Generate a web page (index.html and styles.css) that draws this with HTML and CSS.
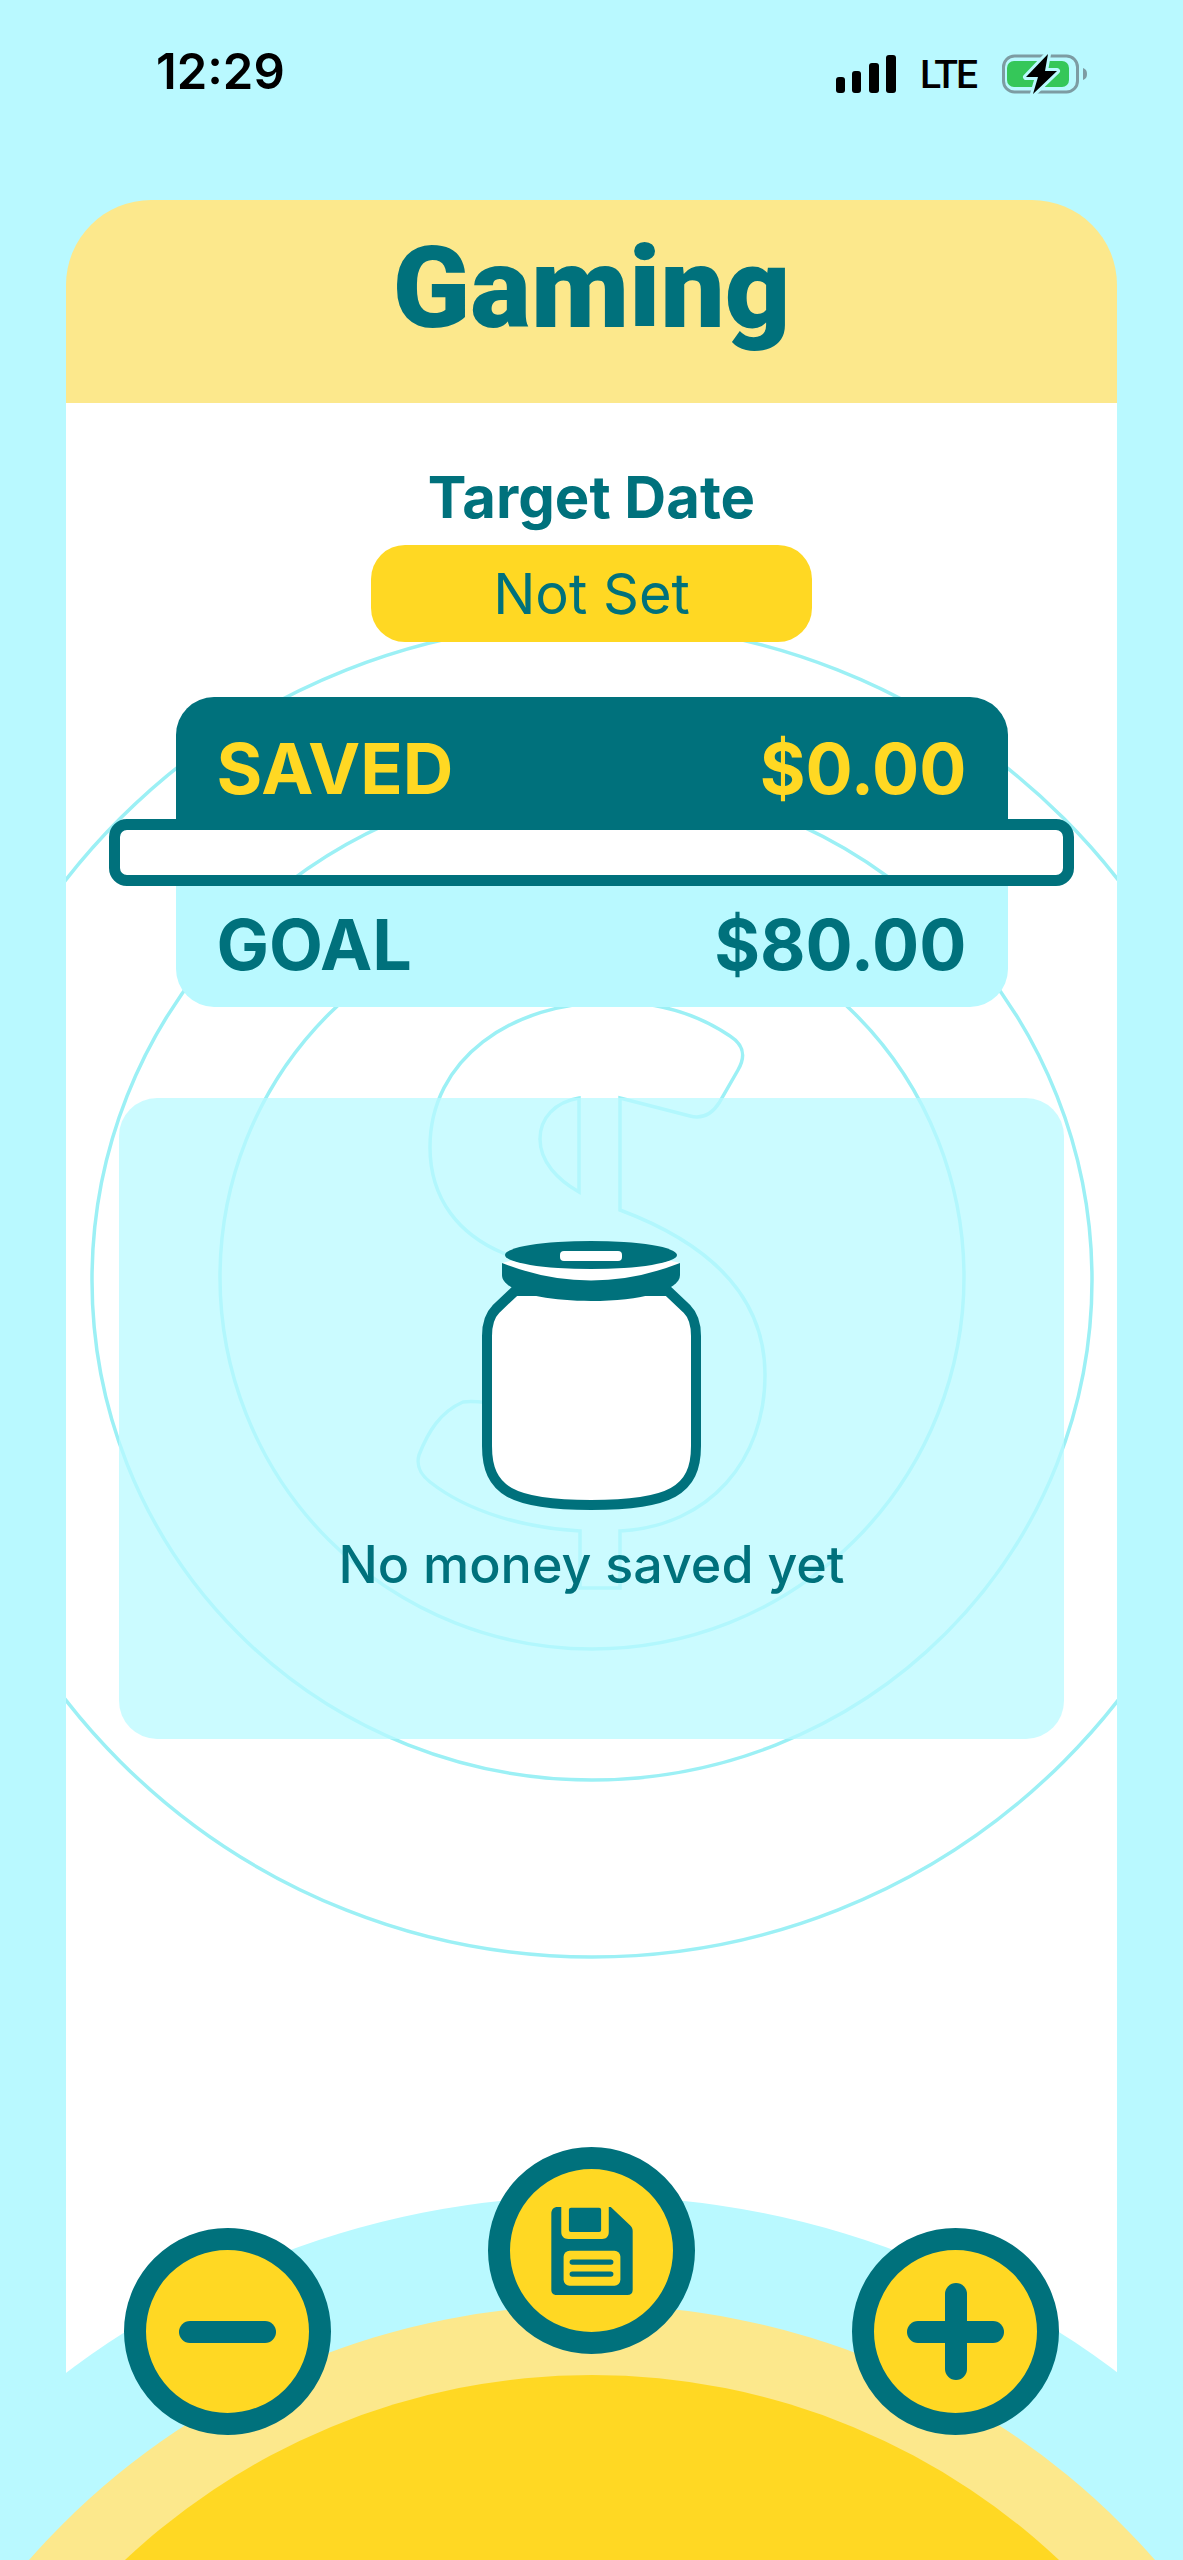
FILE: index.html
```html
<!DOCTYPE html>
<html lang="en">
<head>
    <meta charset="UTF-8">
    <title>Gaming</title>
    <link rel="stylesheet" href="styles.css">
</head>
<body>

<div class="status-bar">
    <span class="time">12:29</span>
    <div class="status-right">
        <svg class="signal" width="60" height="38" viewBox="0 0 60 38">
            <rect x="0" y="22" width="9" height="16" rx="3"/>
            <rect x="16" y="16" width="9" height="22" rx="3"/>
            <rect x="33" y="8" width="10" height="30" rx="3"/>
            <rect x="50" y="0" width="10" height="38" rx="3"/>
        </svg>
        <span class="network">LTE</span>
        <svg class="battery" width="85" height="40" viewBox="0 0 85 40">
            <rect x="1.5" y="2" width="74" height="36" rx="11" fill="none" stroke="#7d9ca3" stroke-width="3"/>
            <rect x="5" y="7" width="62" height="26" rx="7" fill="#35c759"/>
            <path d="M81 14c3 1 4 3 4 6s-1 5-4 6z" fill="#7d9ca3"/>
            <path d="M46 0L24 23H36L31 40L55 17H43Z" fill="#000" stroke="#b9f9ff" stroke-width="6" paint-order="stroke" stroke-linejoin="round"/>
        </svg>
    </div>
</div>

<div class="card">
    <div class="card-head">
        <h1 class="title">Gaming</h1>
    </div>
    <div class="card-body">
        <!-- coin watermark, coordinates are page pixels -->
        <svg class="coin" viewBox="66 403 1051 2157">
            <circle cx="592" cy="1290" r="667"/>
            <circle cx="592" cy="1280" r="500"/>
            <circle cx="592" cy="1277" r="372"/>
            <path d="M620 1098L690 1116C702 1119 712 1114 719 1103L738 1070C746 1056 744 1045 730 1036C696 1013 655 1002 613 1002C510 1002 430 1060 430 1147C430 1200 460 1235 503 1253L580 1282V1340L500 1404C485 1403 475 1400 463 1402C440 1412 428 1432 419 1455C416 1466 420 1474 430 1482C468 1512 525 1528 580 1531V1588H620V1531C710 1526 765 1460 765 1375C765 1290 700 1240 620 1210Z"/>
            <path d="M579 1098C555 1102 540 1118 540 1139C540 1162 558 1180 579 1192Z"/>
        </svg>

        <h2 class="date-label">Target Date</h2>
        <div class="date-pill">Not Set</div>

        <div class="summary">
            <div class="row row-saved"><span>SAVED</span><span>$0.00</span></div>
            <div class="progress"></div>
            <div class="row row-goal"><span>GOAL</span><span>$80.00</span></div>
        </div>

        <div class="empty-box">
            <svg class="jar" width="219" height="270" viewBox="0 0 219 270">
                <path d="M33 50L14 68C8 74 5 84 5 95V205C5 250 30 264 109 264S214 250 214 205V95C214 84 211 74 205 68L186 50Z" fill="#fff" stroke="#00717c" stroke-width="10" stroke-linejoin="round"/>
                <path d="M20 22V34C20 50 60 60 109 60S198 50 198 34V22Z" fill="#00717c"/>
                <path d="M20 22Q109 57 198 22Q109 -2 20 22Z" fill="#fff"/>
                <ellipse cx="109" cy="14" rx="86" ry="14" fill="#00717c"/>
                <rect x="78" y="10" width="62" height="10" rx="4" fill="#fff"/>
            </svg>
            <p class="empty-text">No money saved yet</p>
        </div>
    </div>
</div>

<div class="hills">
    <div class="hill hill-cyan"></div>
    <div class="hill hill-pale"></div>
    <div class="hill hill-yellow"></div>
</div>

<div class="controls">
    <div class="round-btn">
        <span class="minus-bar"></span>
    </div>
    <div class="round-btn save-btn">
        <svg width="82" height="88" viewBox="245 230 245 265">
            <path d="M245 250C245 238 252 230 264 230H275V305C275 318 283 326 296 326H398C411 326 418 318 418 305V230H424L482 285C487 290 490 295 490 302V480C490 490 484 495 474 495H260C251 495 245 489 245 480Z" fill="#00717c"/>
            <rect x="298" y="232" width="97" height="73" rx="6" fill="#00717c"/>
            <rect x="282" y="362" width="171" height="105" rx="18" fill="#ffd823"/>
            <rect x="300" y="388" width="132" height="16" rx="8" fill="#00717c"/>
            <rect x="300" y="424" width="132" height="16" rx="8" fill="#00717c"/>
        </svg>
    </div>
    <div class="round-btn">
        <span class="minus-bar"></span>
        <span class="plus-bar"></span>
    </div>
</div>

</body>
</html>
```

FILE: styles.css
```css
html, body, div, h1, h2, p, span {
    margin: 0;
    padding: 0;
}
html {
    overflow: hidden;
}
body {
    width: 1183px;
    height: 2560px;
    position: relative;
    overflow: hidden;
    background-color: #b9f9ff;
    font-family: Inter, "Liberation Sans", sans-serif;
    color: #00717c;
}

.status-bar {
    height: 200px;
    box-sizing: border-box;
    padding: 46px 96px 0 156px;
    display: flex;
    justify-content: space-between;
    align-items: flex-start;
    color: #000;
}
.time {
    font-size: 49px;
    line-height: 52px;
    font-weight: 600;
}
.status-right {
    display: flex;
    align-items: center;
    padding-top: 6px;
}
.signal {
    margin-right: 24px;
}
.network {
    font-family: Roboto, sans-serif;
    font-size: 39px;
    line-height: 42px;
    padding-top: 2px;
    font-weight: 500;
    letter-spacing: -2px;
    width: 56px;
    margin-right: 26px;
}

.card {
    width: 1051px;
    height: 2360px;
    margin-left: 66px;
    position: relative;
}
.card-head {
    height: 203px;
    background-color: #fce88c;
    border-radius: 85px 85px 0 0;
    text-align: center;
}
.title {
    font-family: Roboto, sans-serif;
    font-size: 114px;
    line-height: 130px;
    font-weight: 900;
    padding-top: 23px;
}
.card-body {
    height: 2157px;
    background-color: #fff;
    position: relative;
    overflow: hidden;
    text-align: center;
}
.coin {
    position: absolute;
    left: 0;
    top: 0;
    width: 1051px;
    height: 2157px;
    fill: none;
    stroke: #9cf0f5;
    stroke-width: 3.5;
}

.date-label {
    position: relative;
    font-size: 58px;
    line-height: 68px;
    font-weight: 700;
    padding-top: 60px;
}
.date-pill {
    position: relative;
    width: 441px;
    height: 97px;
    line-height: 99px;
    margin: 14px auto 0;
    font-size: 56px;
    background-color: #ffd823;
    border-radius: 34px;
}

.summary {
    position: relative;
    width: 832px;
    margin: 55px auto 0;
}
.row {
    display: flex;
    justify-content: space-between;
    box-sizing: border-box;
    padding: 0 41px;
    font-size: 70px;
    font-weight: 700;
}
.row-saved {
    height: 122px;
    line-height: 86px;
    padding-top: 29px;
    background-color: #00717c;
    color: #ffd823;
    border-radius: 38px 38px 0 0;
}
.row-goal {
    height: 121px;
    line-height: 86px;
    padding-top: 16px;
    background-color: #b9f9ff;
    border-radius: 0 0 38px 38px;
}
.progress {
    height: 67px;
    box-sizing: border-box;
    margin: 0 -66px 0 -67px;
    border: 11px solid #00717c;
    border-radius: 18px;
}

.empty-box {
    position: relative;
    width: 945px;
    height: 641px;
    box-sizing: border-box;
    margin: 91px auto 0;
    padding-top: 143px;
    background-color: rgba(185, 249, 255, 0.75);
    border-radius: 38px;
}
.jar {
    display: block;
    margin: 0 auto;
}
.empty-text {
    font-size: 52px;
    font-weight: 500;
    line-height: 64px;
    margin-top: 22px;
}

.hills {
    position: absolute;
    left: 0;
    top: 0;
    width: 1183px;
    height: 2560px;
    overflow: hidden;
}
.hill {
    position: absolute;
    border-radius: 50%;
}
.hill-cyan {
    left: -278px;
    top: 2196px;
    width: 1740px;
    height: 1740px;
    background-color: #b9f9ff;
}
.hill-pale {
    left: -157px;
    top: 2305px;
    width: 1498px;
    height: 1498px;
    background-color: #fce88c;
}
.hill-yellow {
    left: -90px;
    top: 2375px;
    width: 1364px;
    height: 1364px;
    background-color: #ffd823;
}

.controls {
    position: absolute;
    left: 124px;
    right: 124px;
    top: 2147px;
    display: flex;
    justify-content: space-between;
    align-items: flex-start;
}
.round-btn {
    width: 207px;
    height: 207px;
    box-sizing: border-box;
    margin-top: 81px;
    border: 22px solid #00717c;
    border-radius: 50%;
    background-color: #ffd823;
    display: flex;
    align-items: center;
    justify-content: center;
    position: relative;
}
.save-btn {
    margin-top: 0;
}
.minus-bar {
    width: 97px;
    height: 22px;
    border-radius: 11px;
    background-color: #00717c;
}
.plus-bar {
    position: absolute;
    width: 22px;
    height: 97px;
    border-radius: 11px;
    background-color: #00717c;
}
```
